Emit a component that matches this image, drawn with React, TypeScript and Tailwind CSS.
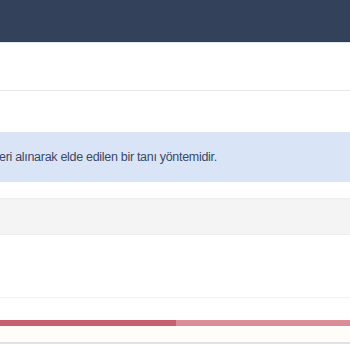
const App = () => {
  return (
    <div className="w-[350px] h-[350px] overflow-hidden bg-white font-['Liberation_Sans',Arial,sans-serif]">
      {/* top navbar */}
      <div className="h-[42px] bg-[#33425a] border-b border-[#dbe5f4] box-content" />

      {/* page title row */}
      <div className="h-[48px] border-b border-[#e9e9e9]" />

      <div className="h-[41px]" />

      {/* info alert */}
      <div className="h-[50px] bg-[#d9e5f7] flex items-center overflow-hidden">
        <p className="whitespace-nowrap text-[12.5px] tracking-[-0.3px] leading-none text-[#3b4869] -ml-[1px] pt-[1px]">
          eri alınarak elde edilen bir tanı yöntemidir.
        </p>
      </div>

      <div className="h-[16px]" />

      {/* tabs strip */}
      <div className="h-[35px] bg-[#f4f4f4] border-y border-[#ececec] box-content" />

      {/* panel body */}
      <div className="h-[63px] border-b border-[#f2f2f2]" />

      <div className="h-[22px]" />

      {/* progress */}
      <div className="h-[6px] flex">
        <div className="w-[176px] bg-[#c95e6e]" />
        <div className="flex-1 bg-[#da8c97]" />
      </div>
      <div className="h-[16px] bg-[#fffdf9] border-b-2 border-[#e3e3e3] box-content" />
    </div>
  );
};

export default App;
